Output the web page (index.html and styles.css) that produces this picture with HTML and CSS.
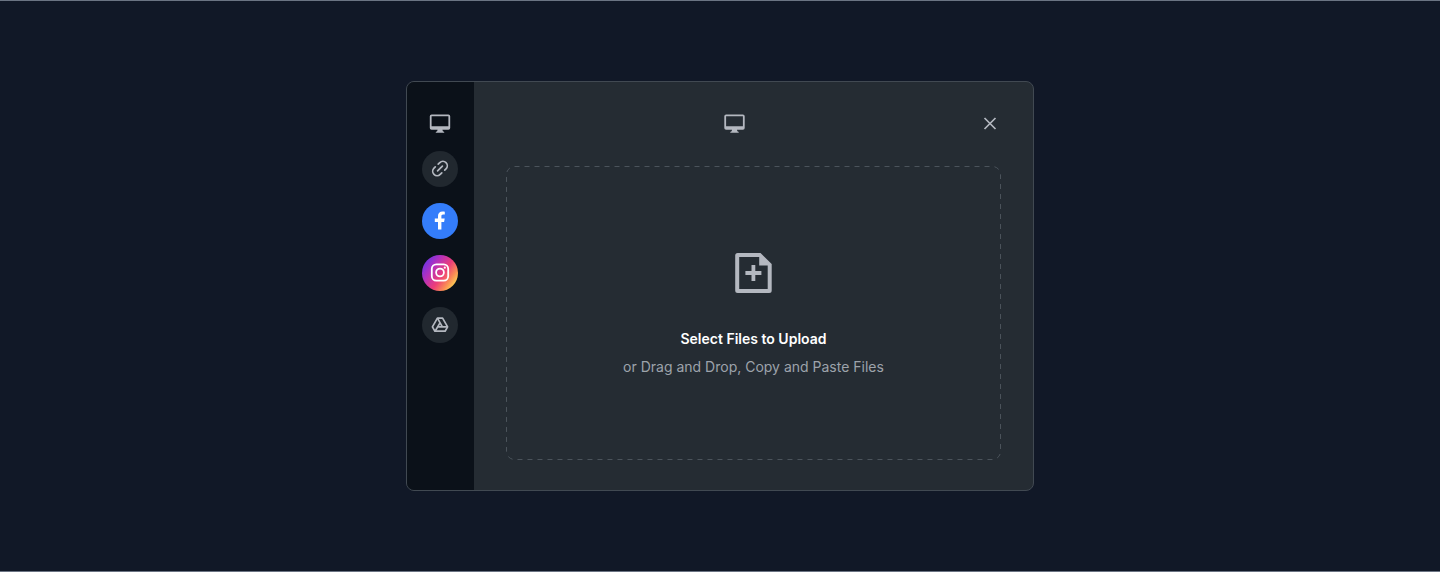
FILE: index.html
```
<!DOCTYPE html>
<html lang="en">
<head>
<meta charset="utf-8">
<title>File upload</title>
<link rel="stylesheet" href="styles.css">
</head>
<body>
<main class="page">
  <section class="picker">
    <nav class="sources">
      <button class="source source-local" aria-label="My device">
        <svg width="22" height="20" viewBox="0 0 22 20"><path fill="currentColor" fill-rule="evenodd" d="M2.600 .5h16.800Q21.200 .5 21.200 2.300v11.600q0 1.800-1.800 1.800H13.400l.5 1.500 1 .6q.4.3.4.9H6.700q0-.6.4-.9l1-.6.5-1.500H2.600Q.8 15.700 .8 13.900V2.300Q.8 .5 2.600 .5ZM2.600 2.200v10h16.800V2.200Z"/></svg>
      </button>
      <button class="source source-link" aria-label="Link">
        <svg width="18" height="18" viewBox="0 0 18 18" fill="none" stroke="currentColor" stroke-width="1.700" stroke-linecap="round"><path d="M6.600 10.900l4.800-4.800M7.200 4.200l1.600-1.600a4.350 4.350 0 0 1 6.200 6.200L13.700 10.100M4.300 6.900L3 8.200a4.350 4.350 0 0 0 6.200 6.200l1.600-1.600"/></svg>
      </button>
      <button class="source source-facebook" aria-label="Facebook">
        <svg width="12" height="20" viewBox="0 0 12 20"><path fill="currentColor" d="M4 18.500v-7.600H.8V7.600H4V5.100C4 2 5.800.5 8.500.5c.9 0 1.800.1 2.300.2v2.900H9.100C7.800 3.600 7.400 4.400 7.400 5.300v2.300h3.300l-.6 3.300H7.400v7.600Z"/></svg>
      </button>
      <button class="source source-instagram" aria-label="Instagram">
        <svg width="20" height="20" viewBox="0 0 20 20" fill="none" stroke="currentColor" stroke-width="1.800"><rect x="1.800" y="1.300" width="16.400" height="16.400" rx="4.500"/><circle cx="10" cy="9.500" r="3.900"/><circle cx="14.800" cy="4.700" r="1.100" fill="currentColor" stroke="none"/></svg>
      </button>
      <button class="source source-drive" aria-label="Google Drive">
        <svg width="18" height="16" viewBox="0 0 18 16" fill="none" stroke="currentColor" stroke-width="1.700" stroke-linejoin="round"><path d="M6.400 1.200h5.200l5 8.700-2.500 4.300H3.900L1.400 9.900Z"/><path d="M6.400 1.200l5 8.700M9 5.900l-4.900 8.300M6.700 9.900h9.900"/></svg>
      </button>
    </nav>
    <div class="content">
      <header class="toolbar">
        <svg class="toolbar-icon" width="22" height="20" viewBox="0 0 22 20"><path fill="currentColor" fill-rule="evenodd" d="M3.100 .5h16.800Q21.700 .5 21.700 2.300v11.600q0 1.800-1.800 1.800H13.900l.5 1.500 1 .6q.4.3.4.9H7.200q0-.6.4-.9l1-.6.5-1.500H3.100Q1.300 15.700 1.300 13.900V2.300Q1.300 .5 3.100 .5ZM3.100 2.200v10h16.800V2.200Z"/></svg>
        <button class="close" aria-label="Close">
          <svg width="14" height="14" viewBox="0 0 14 14" fill="none" stroke="currentColor" stroke-width="1.700"><path d="M1.500 1l11 11M12.500 1l-11 11"/></svg>
        </button>
      </header>
      <div class="dropzone">
        <svg class="dropzone-border" width="495" height="294"><rect x=".5" y=".5" width="494" height="293" rx="8"/></svg>
        <svg class="dropzone-icon" width="38" height="42" viewBox="0 0 38 42"><path fill="currentColor" fill-rule="evenodd" d="M2.700 1h22.800L36.700 12v26.500q0 2.500-2.500 2.500H2.700Q.2 41 .2 38.500v-35Q.2 1 2.700 1ZM4.200 5v32h28.500V13.500H24.200V5Z"/><path d="M18.400 13v16M10.400 21h16" stroke="currentColor" stroke-width="3.800"/></svg>
        <h1 class="title">Select Files to Upload</h1>
        <p class="hint">or Drag and Drop, Copy and Paste Files</p>
      </div>
    </div>
  </section>
</main>
</body>
</html>
```
FILE: styles.css
```
* {
  box-sizing: border-box;
}

body {
  margin: 0;
  background: #111827;
  font-family: Inter, "Liberation Sans", sans-serif;
}

button {
  padding: 0;
  border: 0;
  background: none;
  color: inherit;
}

svg {
  display: block;
}

.page {
  display: flex;
  justify-content: center;
  height: 572px;
  padding-top: 80px;
  border-top: 1px solid #6b7483;
  border-bottom: 1px solid #6b7483;
}

.picker {
  display: flex;
  width: 628px;
  height: 410px;
  overflow: hidden;
  border: 1px solid #414952;
  border-radius: 8px;
  background: #252c33;
  color: #b4b8c0;
}

.sources {
  display: flex;
  flex-direction: column;
  align-items: center;
  gap: 16px;
  width: 67px;
  padding: 31px 1px 0 0;
  background: #0b1119;
}

.source {
  display: flex;
  align-items: center;
  justify-content: center;
  width: 36px;
  height: 36px;
  border-radius: 50%;
}

.source-local {
  height: 22px;
}

.source-link,
.source-drive {
  background: #21282f;
}

.source-facebook {
  background: #347dfa;
  color: #fff;
}

.source-instagram {
  background: linear-gradient(125deg, #5b35ef 5%, #b331be 32%, #ed3e78 56%, #fa8b55 74%, #fdd253 88%);
  color: #fff;
}

.content {
  flex: 1;
  padding: 0 32px;
}

.toolbar {
  display: flex;
  align-items: center;
  justify-content: space-between;
  height: 84px;
  padding-left: 217px;
  padding-right: 4px;
}

.dropzone {
  position: relative;
  display: flex;
  flex-direction: column;
  align-items: center;
  width: 495px;
  height: 294px;
  padding-top: 86px;
}

.dropzone-border {
  position: absolute;
  inset: 0;
  fill: none;
  stroke: #4b535b;
  stroke-dasharray: 5 5;
}

.title {
  margin: 34px 0 0;
  color: #fff;
  font-size: 14px;
  font-weight: 600;
  line-height: 22px;
}

.hint {
  margin: 6px 0 0;
  color: #9da3ab;
  font-size: 14px;
  line-height: 22px;
}
```
